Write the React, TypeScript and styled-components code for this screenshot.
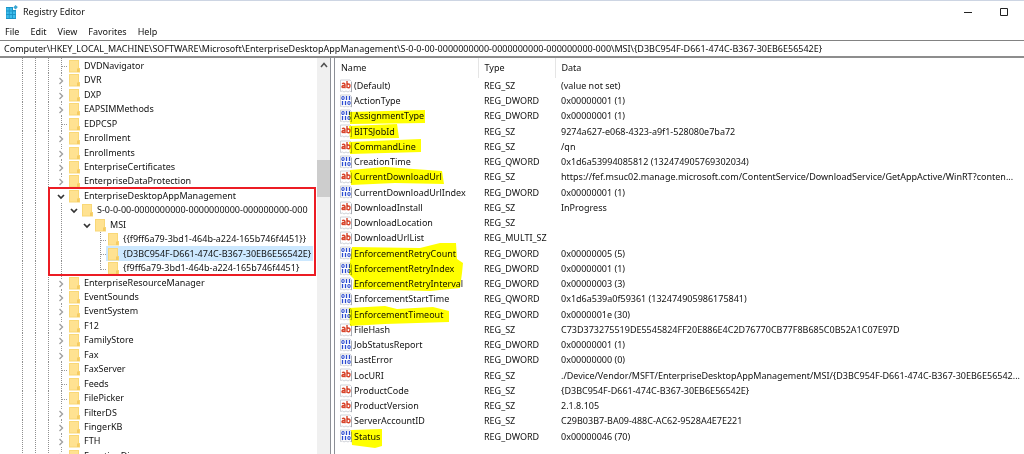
import React, { useState } from "react";
import styled, { createGlobalStyle, css } from "styled-components";

const GlobalStyle = createGlobalStyle`
  *, *::before, *::after { box-sizing: border-box; }
  body {
    margin: 0;
    background: #fff;
    color: #111;
    font-family: "Noto Sans", "Open Sans", sans-serif;
    font-size: 9px;
    line-height: 14px;
  }
  button, input { font: inherit; color: inherit; }
`;

const Window = styled.main`
  display: flex;
  flex-direction: column;
  height: 100vh;
  overflow: hidden;
  border-top: 1px solid #cdd5e3;
`;

const TitleBar = styled.header`
  display: flex;
  align-items: center;
  gap: 5px;
  height: 22px;
  padding: 0 2px 0 5px;
`;

const Title = styled.h1`
  margin: 0;
  font-size: 9px;
  font-weight: 400;
  line-height: 14px;
`;

const WindowControls = styled.div`
  display: flex;
  margin-left: auto;
`;

const WindowButton = styled.button`
  display: grid;
  place-items: center;
  width: 36px;
  height: 22px;
  padding: 0;
  border: 0;
  background: none;
`;

const MenuBar = styled.nav`
  display: flex;
  align-items: center;
  gap: 1px;
  height: 17px;
`;

const MenuButton = styled.button`
  padding: 0 5px;
  border: 0;
  background: none;
  line-height: 14px;
`;

const AddressInput = styled.input`
  width: 100%;
  height: 18px;
  padding: 0 4px;
  border: 0;
  border-top: 1px solid #828282;
  border-bottom: 2px solid #8d8d8d;
  background: #fff;
  outline: 0;
  flex: none;
`;

const Panes = styled.div`
  display: flex;
  flex: 1;
  min-height: 0;
`;

const TreePane = styled.section`
  display: flex;
  flex: 0 0 331px;
  border-right: 1px solid #8c8f96;
  overflow: hidden;
`;

const TreeView = styled.div`
  position: relative;
  flex: 1;
  overflow: hidden;
`;

const TreeList = styled.ul`
  display: grid;
  grid-auto-rows: 15px 14px 15px 14px 15px 14px 15px 14px 14px;
  margin: 0;
  padding: 0 0 0 16px;
  list-style: none;
`;

const TreeRow = styled.li`
  display: flex;
  min-width: 0;
`;

const Guide = styled.svg`
  flex: none;
  width: 13px;
  height: 100%;
`;

const Toggle = styled.button`
  flex: none;
  width: 13px;
  padding: 0;
  border: 0;
  background: none;
  line-height: 0;
`;

const TreeLabel = styled.button<{ $selected: boolean }>`
  display: flex;
  align-items: center;
  gap: 4px;
  margin: 0 0 0 -1px;
  padding: 0 2px;
  border: 0;
  background: ${(p) => (p.$selected ? "#cce8ff" : "none")};
  line-height: 14px;
  white-space: nowrap;
`;

const FolderSvg = styled.svg`
  flex: none;
  width: 11px;
  height: 14px;
`;

const RedFrame = styled.div`
  position: absolute;
  top: 129px;
  left: 48px;
  right: 1px;
  height: 89px;
  border: 2px solid #ec1c24;
  pointer-events: none;
`;

const ScrollTrack = styled.div`
  display: flex;
  flex-direction: column;
  flex: 0 0 13px;
  background: #f0f0f0;
`;

const ScrollButton = styled.button`
  display: grid;
  place-items: center;
  height: 14px;
  padding: 0;
  border: 0;
  background: none;
`;

const ScrollThumb = styled.div`
  height: 37px;
  margin-top: 88px;
  background: #cdcdcd;
`;

const ListPane = styled.section`
  position: relative;
  flex: 1;
  min-width: 0;
  margin-left: 3px;
  border-left: 1px solid #8c8f96;
  overflow: hidden;
`;

const ValueTable = styled.table`
  width: 100%;
  table-layout: fixed;
  border-collapse: collapse;
  text-align: left;
`;

const ColumnHead = styled.th<{ $width?: number }>`
  width: ${(p) => (p.$width ? p.$width + "px" : "auto")};
  height: 20px;
  padding: 0 0 0 6px;
  font-weight: 400;
  ${(p) =>
    p.$width &&
    css`
      border-right: 1px solid #e5e5e5;
    `}
`;

const ValueRow = styled.tr`
  height: 15px;
  &:nth-child(4n) { height: 16px; }
`;

const Cell = styled.td`
  padding: 0 0 0 6px;
  line-height: 15px;
  overflow: hidden;
  text-overflow: ellipsis;
  white-space: nowrap;
`;

const NameCell = styled(Cell)`
  padding-left: 5px;
`;

const NameContent = styled.span`
  display: flex;
  align-items: center;
  gap: 2px;
`;

const ValueSvg = styled.svg`
  flex: none;
  width: 12px;
  height: 14px;
`;

const Ink = styled.svg`
  position: absolute;
  top: 0;
  left: 0;
  width: 140px;
  height: 396px;
  mix-blend-mode: multiply;
  pointer-events: none;
`;

type Branch = "leaf" | "closed" | "open";
interface Node { name: string; depth: number; branch: Branch; last?: boolean }

const n = (name: string, branch: Branch = "closed", depth = 0, last = false): Node => ({ name, branch, depth, last });

const nodes: Node[] = [
  n("DVDNavigator", "leaf"),
  n("DVR"),
  n("DXP"),
  n("EAPSIMMethods"),
  n("EDPCSP", "leaf"),
  n("Enrollment"),
  n("Enrollments"),
  n("EnterpriseCertificates"),
  n("EnterpriseDataProtection"),
  n("EnterpriseDesktopAppManagement", "open"),
  n("S-0-0-00-0000000000-0000000000-000000000-000", "open", 1),
  n("MSI", "open", 2),
  n("{{f9ff6a79-3bd1-464b-a224-165b746f4451}}", "leaf", 3),
  n("{D3BC954F-D661-474C-B367-30EB6E56542E}", "leaf", 3),
  n("{f9ff6a79-3bd1-464b-a224-165b746f4451}", "leaf", 3, true),
  n("EnterpriseResourceManager"),
  n("EventSounds"),
  n("EventSystem"),
  n("F12"),
  n("FamilyStore"),
  n("Fax"),
  n("FaxServer", "leaf"),
  n("Feeds", "leaf"),
  n("FilePicker", "leaf"),
  n("FilterDS"),
  n("FingerKB"),
  n("FTH"),
  n("FunctionDiscovery"),
];

const values: [string, string, string][] = [
  ["(Default)", "REG_SZ", "(value not set)"],
  ["ActionType", "REG_DWORD", "0x00000001 (1)"],
  ["AssignmentType", "REG_DWORD", "0x00000001 (1)"],
  ["BITSJobId", "REG_SZ", "9274a627-e068-4323-a9f1-528080e7ba72"],
  ["CommandLine", "REG_SZ", "/qn"],
  ["CreationTime", "REG_QWORD", "0x1d6a53994085812 (132474905769302034)"],
  ["CurrentDownloadUrl", "REG_SZ", "https://fef.msuc02.manage.microsoft.com/ContentService/DownloadService/GetAppActive/WinRT?conten..."],
  ["CurrentDownloadUrlIndex", "REG_DWORD", "0x00000001 (1)"],
  ["DownloadInstall", "REG_SZ", "InProgress"],
  ["DownloadLocation", "REG_SZ", ""],
  ["DownloadUrlList", "REG_MULTI_SZ", ""],
  ["EnforcementRetryCount", "REG_DWORD", "0x00000005 (5)"],
  ["EnforcementRetryIndex", "REG_DWORD", "0x00000001 (1)"],
  ["EnforcementRetryInterval", "REG_DWORD", "0x00000003 (3)"],
  ["EnforcementStartTime", "REG_QWORD", "0x1d6a539a0f59361 (132474905986175841)"],
  ["EnforcementTimeout", "REG_DWORD", "0x0000001e (30)"],
  ["FileHash", "REG_SZ", "C73D373275519DE5545824FF20E886E4C2D76770CB77F8B685C0B52A1C07E97D"],
  ["JobStatusReport", "REG_DWORD", "0x00000001 (1)"],
  ["LastError", "REG_DWORD", "0x00000000 (0)"],
  ["LocURI", "REG_SZ", "./Device/Vendor/MSFT/EnterpriseDesktopAppManagement/MSI/{D3BC954F-D661-474C-B367-30EB6E56542..."],
  ["ProductCode", "REG_SZ", "{D3BC954F-D661-474C-B367-30EB6E56542E}"],
  ["ProductVersion", "REG_SZ", "2.1.8.105"],
  ["ServerAccountID", "REG_SZ", "C29B03B7-BA09-488C-AC62-9528A4E7E221"],
  ["Status", "REG_DWORD", "0x00000046 (70)"],
];

const Folder = () => (
  <FolderSvg viewBox="0 0 11 14" aria-hidden="true">
    <path d="M0 1h10v8h1v4.500H0z" fill="#f9d877" />
    <path d="M1 2h8v10.500H1z" fill="#ffe291" />
    <path d="M8 9.500h2.300V13H8z" fill="#f5cb62" />
  </FolderSvg>
);

const AppIcon = () => (
  <svg width="13" height="14" viewBox="0 0 13 14" aria-hidden="true">
    <path d="M1 2h7v3h3v9H1z" fill="#1b93c6" />
    <path d="M1.500 3h2.300v2.600H1.500zM4.600 3h2.400v2.600H4.600zM1.500 6.500h2.300v2.600H1.500zM4.600 6.500h2.400v2.600H4.600zM7.900 6.500h2.400v2.600H7.900zM1.500 10h2.300v3H1.500zM4.600 10h2.400v3H4.600zM7.900 10h2.400v3H7.900z" fill="#3cbcec" />
    <path d="M10.500 0l2.300 2.100-2.100 2.500L8.300 2.500z" fill="#3aa5d2" />
  </svg>
);

const ValueIcon = ({ text }: { text: boolean }) => (
  <ValueSvg viewBox="0 0 12 14" aria-hidden="true">
    <path d="M.5 1h9.500l1.500 1.500V13l-2-1-1.500 1-2-1-2 1-1.500-1-2 .5z" fill="#fff" stroke="#d0d2d8" strokeWidth="1" />
    <path d="M11.500 3v10" stroke="#a9acb4" strokeWidth="1" />
    {text ? (
      <g fill="none" stroke="#d8432a" strokeWidth="1.400">
        <path d="M2 4.700Q5 3.500 5 5.700v3.500M5 6.600Q2 6.300 2 7.700t3 .5" />
        <path d="M7 2v7M7 5.700q3-1.700 3 1.100t-3 1.500" />
      </g>
    ) : (
      <g fill="none" stroke="#2b4bd0">
        <ellipse cx="3" cy="4" rx="1.200" ry="1.500" strokeWidth="1.100" />
        <ellipse cx="9" cy="9" rx="1.200" ry="1.500" strokeWidth="1.100" />
        <path d="M6.500 2v4M9.500 2v4M2.500 7v4M5.500 7v4" strokeWidth="1.300" />
      </g>
    )}
  </ValueSvg>
);

const DottedGuide = ({ height = "100%", tick = false }: { height?: string; tick?: boolean }) => (
  <Guide aria-hidden="true">
    <line x1="6.500" y1="0" x2="6.500" y2={height} stroke="#8f8f8f" strokeDasharray="1 1" />
    {tick && <line x1="7" y1="8.500" x2="12" y2="8.500" stroke="#9a9a9a" strokeDasharray="1 1" />}
  </Guide>
);

const Chevron = ({ open }: { open: boolean }) => (
  <svg width="13" height="14" viewBox="0 0 13 14" aria-hidden="true">
    {!open && <path d="M6.500 0v3M6.500 13v1" stroke="#9a9a9a" strokeDasharray="1 1" />}
    <path
      d={open ? "M3 6l3 3 3-3" : "M4.500 5l3 3-3 3"}
      fill="none"
      stroke={open ? "#333" : "#a0a0a0"}
      strokeWidth={open ? 1.700 : 1.400}
    />
  </svg>
);

export default function App() {
  const [selected, setSelected] = useState(13);
  const [address, setAddress] = useState(
    "Computer\\HKEY_LOCAL_MACHINE\\SOFTWARE\\Microsoft\\EnterpriseDesktopAppManagement\\S-0-0-00-0000000000-0000000000-000000000-000\\MSI\\{D3BC954F-D661-474C-B367-30EB6E56542E}"
  );

  return (
    <>
      <GlobalStyle />
      <Window>
        <TitleBar>
          <AppIcon />
          <Title>Registry Editor</Title>
          <WindowControls>
            <WindowButton aria-label="Minimize">
              <svg width="8" height="8"><path d="M0 4.500h8" stroke="#222" /></svg>
            </WindowButton>
            <WindowButton aria-label="Maximize">
              <svg width="8" height="8"><path d="M.5.500h7v7h-7z" fill="none" stroke="#222" /></svg>
            </WindowButton>
          </WindowControls>
        </TitleBar>
        <MenuBar aria-label="Menu">
          {["File", "Edit", "View", "Favorites", "Help"].map((m) => (
            <MenuButton key={m}>{m}</MenuButton>
          ))}
        </MenuBar>
        <AddressInput aria-label="Address" value={address} onChange={(e) => setAddress(e.target.value)} />
        <Panes>
          <TreePane aria-label="Keys">
            <TreeView>
              <TreeList>
                {nodes.map((node, i) => (
                  <TreeRow key={node.name}>
                    <DottedGuide />
                    <DottedGuide />
                    <DottedGuide />
                    {node.depth > 0 && <DottedGuide />}
                    {node.depth > 1 && <Guide aria-hidden="true" />}
                    {node.depth > 2 && <Guide aria-hidden="true" />}
                    {node.branch === "leaf" ? (
                      <DottedGuide tick height={node.last ? "9" : "100%"} />
                    ) : (
                      <Toggle aria-label={(node.branch === "open" ? "Collapse " : "Expand ") + node.name}>
                        <Chevron open={node.branch === "open"} />
                      </Toggle>
                    )}
                    <TreeLabel $selected={i === selected} onClick={() => setSelected(i)}>
                      <Folder />
                      {node.name}
                    </TreeLabel>
                  </TreeRow>
                ))}
              </TreeList>
              <RedFrame />
            </TreeView>
            <ScrollTrack>
              <ScrollButton aria-label="Scroll up">
                <svg width="8" height="6"><path d="M1 5l3-3.500L7 5" fill="none" stroke="#505050" strokeWidth="1.500" /></svg>
              </ScrollButton>
              <ScrollThumb />
            </ScrollTrack>
          </TreePane>
          <ListPane aria-label="Values">
            <ValueTable>
              <thead>
                <tr>
                  <ColumnHead $width={143}>Name</ColumnHead>
                  <ColumnHead $width={77}>Type</ColumnHead>
                  <ColumnHead>Data</ColumnHead>
                </tr>
              </thead>
              <tbody>
                {values.map(([name, type, data]) => (
                  <ValueRow key={name}>
                    <NameCell>
                      <NameContent>
                        <ValueIcon text={type.endsWith("SZ")} />
                        {name}
                      </NameContent>
                    </NameCell>
                    <Cell>{type}</Cell>
                    <Cell>{data}</Cell>
                  </ValueRow>
                ))}
              </tbody>
            </ValueTable>
            <Ink viewBox="0 0 140 396" fill="#ffff00" aria-hidden="true">
              <path d="M14 54L90 52V65L15 66z" />
              <path d="M14 68L62 66L64 80L15 81z" />
              <path d="M14 84L86 81V94L15 96z" />
              <path d="M15 112L50 109L107 113L109 126L60 125L16 127z" />
              <path d="M17 189L85 190L105 185H121L122 201L128 205L127 215L125 230L95 233L18 231L19 221L14 216L15 204z" />
              <path d="M14 250L50 248L62 251L98 249L114 253V264L50 266L15 268z" />
              <path d="M16 372L47 371V388L40 390L17 387z" />
            </Ink>
          </ListPane>
        </Panes>
      </Window>
    </>
  );
}
